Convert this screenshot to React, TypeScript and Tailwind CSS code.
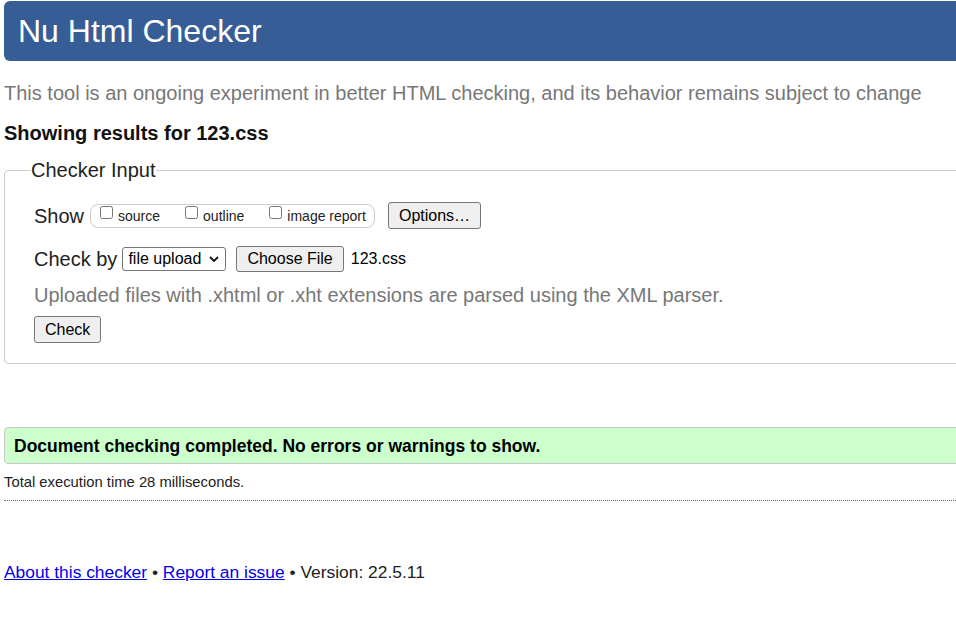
import type { ReactNode } from 'react'

function NativeButton({ children, className = '' }: { children: ReactNode; className?: string }) {
  return (
    <button
      type="button"
      className={`rounded-[3px] border border-[#767676] bg-[#efefef] text-[16px] leading-[18px] text-black ${className}`}
    >
      {children}
    </button>
  )
}

function ShowOption({ label, first }: { label: string; first?: boolean }) {
  return (
    <label className={`flex items-center ${first ? '' : 'ml-[25px]'}`}>
      <input type="checkbox" className="m-0 mr-[5px] h-[13px] w-[13px] -translate-y-[3px]" />
      <span>{label}</span>
    </label>
  )
}

export default function App() {
  return (
    <div className="min-h-screen w-full overflow-hidden bg-white font-['Liberation_Sans',Arial,sans-serif] text-[#222]">
      <div className="w-[1000px] pl-[4px] pt-px">
        <header className="flex h-[60px] items-center rounded-[6px] bg-[#365d95] pl-[14px]">
          <h1 className="text-[32px] font-normal leading-none text-white">Nu Html Checker</h1>
        </header>

        <p className="mt-[20px] text-[20px] leading-[24px] text-[#777]">
          This tool is an ongoing experiment in better HTML checking, and its behavior remains subject to change
        </p>

        <h2 className="mt-[17px] text-[20px] font-bold leading-[22px] text-[#111]">Showing results for 123.css</h2>

        <fieldset className="mt-[15px] rounded-[4px] border border-[#ccc] pb-[20px] pl-[29px]">
          <legend className="-ml-[3px] text-[20px] leading-[23px]">Checker Input</legend>

          <div className="mt-[20px] flex h-[27px] items-center">
            <span className="text-[20px] leading-[24px]">Show</span>
            <div className="ml-[6px] flex h-[24px] w-[285px] items-center rounded-[8px] border border-[#ccc] pl-[9px] text-[14px] leading-[16px]">
              <ShowOption label="source" first />
              <ShowOption label="outline" />
              <ShowOption label="image report" />
            </div>
            <NativeButton className="ml-[13px] h-[27px] w-[93px]">Options…</NativeButton>
          </div>

          <div className="mt-[17px] flex h-[26px] items-center">
            <span className="text-[20px] leading-[24px]">Check by</span>
            <div className="ml-[5px] flex h-[24px] w-[104px] items-center justify-between rounded-[3px] border border-[#767676] pl-[5px] pr-[6px] text-[16px] leading-[18px] text-black">
              <span>file upload</span>
              <svg width="10" height="6" viewBox="0 0 10 6" fill="none">
                <path d="M1 1l4 4 4-4" stroke="#111" strokeWidth="1.8" />
              </svg>
            </div>
            <NativeButton className="ml-[10px] h-[26px] px-[10px]">Choose File</NativeButton>
            <span className="ml-[7px] text-[16px] leading-[18px] text-black">123.css</span>
          </div>

          <p className="mt-[11px] text-[20px] leading-[24px] text-[#777]">
            Uploaded files with .xhtml or .xht extensions are parsed using the XML parser.
          </p>

          <NativeButton className="mt-[9px] h-[27px] px-[10px]">Check</NativeButton>
        </fieldset>

        <div className="mt-[63px] flex h-[37px] items-center rounded-[4px] border border-[#c8c8c8] bg-[#ccffcc] pl-[9px]">
          <span className="text-[17.5px] font-bold leading-[18px] text-black">
            Document checking completed. No errors or warnings to show.
          </span>
        </div>

        <p className="mt-[10px] text-[14.8px] leading-[17px] text-[#222]">Total execution time 28 milliseconds.</p>

        <hr className="mt-[9px] border-0 border-t border-dotted border-[#666]" />

        <p className="mt-[61px] text-[17.4px] leading-[20px] text-[#222]">
          <a href="#" className="text-[#0000ee] underline">About this checker</a>
          {' • '}
          <a href="#" className="text-[#0000ee] underline">Report an issue</a>
          {' • Version: 22.5.11'}
        </p>
      </div>
    </div>
  )
}
